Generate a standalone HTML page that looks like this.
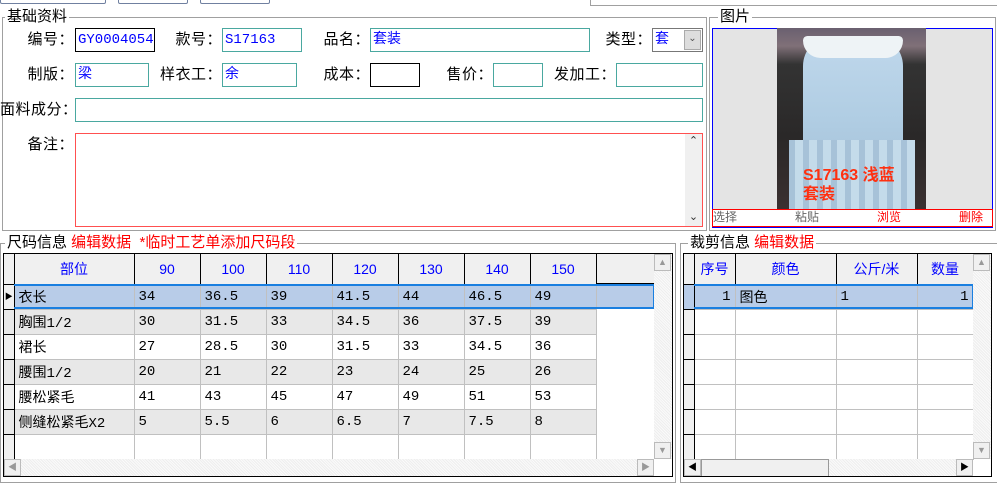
<!DOCTYPE html>
<html><head><meta charset="utf-8"><style>
*{box-sizing:border-box;margin:0;padding:0}
body{width:997px;height:477px;overflow:hidden;background:#fff;position:relative;font-family:"Liberation Sans","Noto Sans CJK SC","WenQuanYi Zen Hei",sans-serif;font-size:14px;color:#000}
.a{position:absolute}
.fs{position:absolute;border:1px solid #a0a0a0}
.lg{position:absolute;background:#fff;padding:0 2px;font-size:15px;line-height:16px;white-space:nowrap}
.lb{position:absolute;font-size:15px;line-height:24px;text-align:right;white-space:nowrap;letter-spacing:0.5px}
.in{position:absolute;border:1px solid #4aa8a0;background:#fff;color:#0000ff;font-family:"Liberation Mono","Noto Sans CJK SC",monospace;font-size:14px;line-height:22px;padding-left:2px;white-space:nowrap}
.r{color:#ff0000}
table{border-collapse:collapse;position:absolute;table-layout:fixed}
td{border:1px solid #c0c0c0;height:25px;padding:0 4px;font-family:"Liberation Mono","Noto Sans CJK SC",monospace;font-size:14px;white-space:nowrap;overflow:hidden}
th{border:1px solid #000;border-top:none;height:30px;background:#f0f0f0;color:#0000ff;font-weight:normal;font-size:14px;text-align:center}
td.rh{background:#f0f0f0;border:1px solid #000;border-left:none;padding:0}
tr.g td{background:#e8e8e8}
tr.s td{background:#b8cce8}
.sb{position:absolute;background:#f4f4f4;background-image:repeating-linear-gradient(45deg,#eee 0 1px,#fafafa 1px 2px)}
.btn{position:absolute;background:#f0f0f0;border:1px solid #bbb;width:17px;height:17px;font-size:9px;color:#999;text-align:center;line-height:15px}
</style></head><body>
<div class="a" style="left:0;top:-4px;width:106px;height:8px;border:1px solid #7080a0;border-radius:2px"></div>
<div class="a" style="left:118px;top:-4px;width:70px;height:8px;border:1px solid #7080a0;border-radius:2px"></div>
<div class="a" style="left:200px;top:-4px;width:70px;height:8px;border:1px solid #7080a0;border-radius:2px"></div>
<div class="a" style="left:590px;top:-4px;width:408px;height:10px;border:1px solid #a0a0a0"></div>

<div class="fs" style="left:2px;top:17px;width:705px;height:214px"></div>
<div class="lg" style="left:5px;top:9px">基础资料</div>
<div class="lb" style="left:0;top:28px;width:74px">编号：</div>
<div class="in" style="left:75px;top:28px;width:80px;height:24px;border-color:#000">GY0004054</div>
<div class="lb" style="left:150px;top:28px;width:72px">款号：</div>
<div class="in" style="left:222px;top:28px;width:80px;height:24px">S17163</div>
<div class="lb" style="left:300px;top:28px;width:70px">品名：</div>
<div class="in" style="left:370px;top:28px;width:220px;height:24px">套装</div>
<div class="lb" style="left:590px;top:28px;width:62px">类型：</div>
<div class="in" style="left:652px;top:28px;width:51px;height:24px;border-color:#777">套<div class="a" style="right:1px;top:1px;width:17px;height:20px;background:#ddd;border:1px solid #aaa;color:#555;font-size:10px;line-height:18px;text-align:center">&#8964;</div></div>

<div class="lb" style="left:0;top:63px;width:74px">制版：</div>
<div class="in" style="left:75px;top:63px;width:74px;height:24px">梁</div>
<div class="lb" style="left:150px;top:63px;width:72px">样衣工：</div>
<div class="in" style="left:222px;top:63px;width:75px;height:24px">余</div>
<div class="lb" style="left:300px;top:63px;width:70px">成本：</div>
<div class="in" style="left:370px;top:63px;width:50px;height:24px;border-color:#000"></div>
<div class="lb" style="left:420px;top:63px;width:73px">售价：</div>
<div class="in" style="left:493px;top:63px;width:50px;height:24px"></div>
<div class="lb" style="left:540px;top:63px;width:76px">发加工：</div>
<div class="in" style="left:616px;top:63px;width:87px;height:24px"></div>

<div class="lb" style="left:0;top:98px;width:74px">面料成分：</div>
<div class="in" style="left:75px;top:98px;width:628px;height:24px"></div>
<div class="lb" style="left:0;top:133px;width:74px">备注：</div>
<div class="in" style="left:75px;top:133px;width:628px;height:94px;border-color:#ff5050"><div class="a" style="right:0;top:0;width:17px;height:92px;background:#f0f0f0;color:#333;font-size:11px;text-align:center"><div style="line-height:16px">&#8963;</div><div style="position:absolute;bottom:0;width:17px;line-height:16px">&#8964;</div></div></div>

<div class="fs" style="left:709px;top:17px;width:287px;height:214px"></div>
<div class="lg" style="left:718px;top:9px">图片</div>
<div class="a" style="left:712px;top:28px;width:281px;height:200px;border:1px solid #0000ff;background:#e4e4e4"></div>
<div class="a" style="left:777px;top:28px;width:149px;height:181px;background:linear-gradient(#6a6070 0,#807078 10%,#333 20%,#2a2828 60%,#3a3030 100%);overflow:hidden">
 <div class="a" style="left:26px;top:8px;width:100px;height:120px;background:linear-gradient(#c0d8ec,#b0cde3 70%,#aac6dc);border-radius:30px 30px 4px 4px"></div>
 <div class="a" style="left:26px;top:8px;width:100px;height:22px;background:#eef3f6;border-radius:10px 10px 40px 40px"></div>
 <div class="a" style="left:12px;top:112px;width:126px;height:69px;background:repeating-linear-gradient(90deg,#a7c2d8 0 6px,#c4dbea 6px 14px)"></div>
 <div class="a" style="left:26px;top:138px;font-size:16px;font-weight:bold;color:#ff3010;line-height:19px;white-space:nowrap">S17163 浅蓝<br>套装</div>
</div>
<div class="a" style="left:712px;top:209px;width:281px;height:18px;border:1px solid #ff0000;background:#fff;font-size:12px;line-height:15px">
 <span class="a" style="left:0;color:#666">选择</span><span class="a" style="left:82px;color:#666">粘贴</span><span class="a" style="left:164px;color:#f00">浏览</span><span class="a" style="left:246px;color:#f00">删除</span>
</div>

<div class="fs" style="left:0;top:243px;width:676px;height:240px"></div>
<div class="lg" style="left:5px;top:235px">尺码信息 <span class="r">编辑数据 &nbsp;*临时工艺单添加尺码段</span></div>
<div class="a" style="left:3px;top:253px;width:670px;height:224px;border:1px solid #000;background:#fff;overflow:hidden">
<div class="a" style="left:592px;top:0;width:58px;height:30px;background:#f0f0f0;border-bottom:1px solid #000"></div>
<div class="a" style="left:592px;top:30px;width:58px;height:25px;background:#b8cce8"></div>
<table style="left:0;top:0;width:592px">
<colgroup><col style="width:10px"><col style="width:120px"><col style="width:66px"><col style="width:66px"><col style="width:66px"><col style="width:66px"><col style="width:66px"><col style="width:66px"><col style="width:66px"></colgroup>
<tr><th style="border-left:none"></th><th>部位</th><th>90</th><th>100</th><th>110</th><th>120</th><th>130</th><th>140</th><th>150</th></tr>
<tr class="s"><td class="rh" style="font-size:8px;text-align:center;background:#f0f0f0">&#9654;</td><td>衣长</td><td>34</td><td>36.5</td><td>39</td><td>41.5</td><td>44</td><td>46.5</td><td>49</td></tr>
<tr class="g"><td class="rh"></td><td>胸围1/2</td><td>30</td><td>31.5</td><td>33</td><td>34.5</td><td>36</td><td>37.5</td><td>39</td></tr>
<tr><td class="rh"></td><td>裙长</td><td>27</td><td>28.5</td><td>30</td><td>31.5</td><td>33</td><td>34.5</td><td>36</td></tr>
<tr class="g"><td class="rh"></td><td>腰围1/2</td><td>20</td><td>21</td><td>22</td><td>23</td><td>24</td><td>25</td><td>26</td></tr>
<tr><td class="rh"></td><td>腰松紧毛</td><td>41</td><td>43</td><td>45</td><td>47</td><td>49</td><td>51</td><td>53</td></tr>
<tr class="g"><td class="rh"></td><td>侧缝松紧毛X2</td><td>5</td><td>5.5</td><td>6</td><td>6.5</td><td>7</td><td>7.5</td><td>8</td></tr>
<tr><td class="rh"></td><td></td><td></td><td></td><td></td><td></td><td></td><td></td><td></td></tr>
</table>
<div class="a" style="left:10px;top:30px;width:640px;height:25px;border:2px solid #1a7fe0;border-left:none;border-right-width:1px;pointer-events:none"></div>
<div class="sb" style="left:650px;top:0;width:18px;height:205px"></div>
<div class="btn" style="left:650px;top:0">&#9650;</div>
<div class="btn" style="left:650px;top:188px">&#9660;</div>
<div class="sb" style="left:0;top:205px;width:650px;height:18px"></div>
<div class="btn" style="left:0;top:205px">&#9664;</div>
<div class="btn" style="left:633px;top:205px">&#9654;</div>
</div>

<div class="fs" style="left:680px;top:243px;width:320px;height:240px"></div>
<div class="lg" style="left:688px;top:235px">裁剪信息 <span class="r">编辑数据</span></div>
<div class="a" style="left:683px;top:253px;width:309px;height:224px;border:1px solid #000;background:#fff;overflow:hidden">
<table style="left:0;top:0;width:289px">
<colgroup><col style="width:10px"><col style="width:41px"><col style="width:101px"><col style="width:81px"><col style="width:56px"></colgroup>
<tr><th style="border-left:none"></th><th>序号</th><th>颜色</th><th>公斤/米</th><th>数量</th></tr>
<tr class="s"><td class="rh"></td><td style="text-align:right">1</td><td>图色</td><td>1</td><td style="text-align:right">1</td></tr>
<tr><td class="rh"></td><td></td><td></td><td></td><td></td></tr>
<tr><td class="rh"></td><td></td><td></td><td></td><td></td></tr>
<tr><td class="rh"></td><td></td><td></td><td></td><td></td></tr>
<tr><td class="rh"></td><td></td><td></td><td></td><td></td></tr>
<tr><td class="rh"></td><td></td><td></td><td></td><td></td></tr>
<tr><td class="rh"></td><td></td><td></td><td></td><td></td></tr>
</table>
<div class="a" style="left:10px;top:30px;width:279px;height:25px;border:2px solid #1a7fe0;border-left:none;border-right-width:1px"></div>
<div class="sb" style="left:289px;top:0;width:18px;height:205px"></div>
<div class="btn" style="left:289px;top:0">&#9650;</div>
<div class="btn" style="left:289px;top:188px">&#9660;</div>
<div class="sb" style="left:0;top:205px;width:289px;height:18px"></div>
<div class="btn" style="left:0;top:205px;color:#000">&#9664;</div>
<div class="a" style="left:17px;top:205px;width:128px;height:18px;background:#f0f0f0;border:1px solid #999"></div>
<div class="btn" style="left:272px;top:205px;color:#000">&#9654;</div>
</div>
</body></html>
